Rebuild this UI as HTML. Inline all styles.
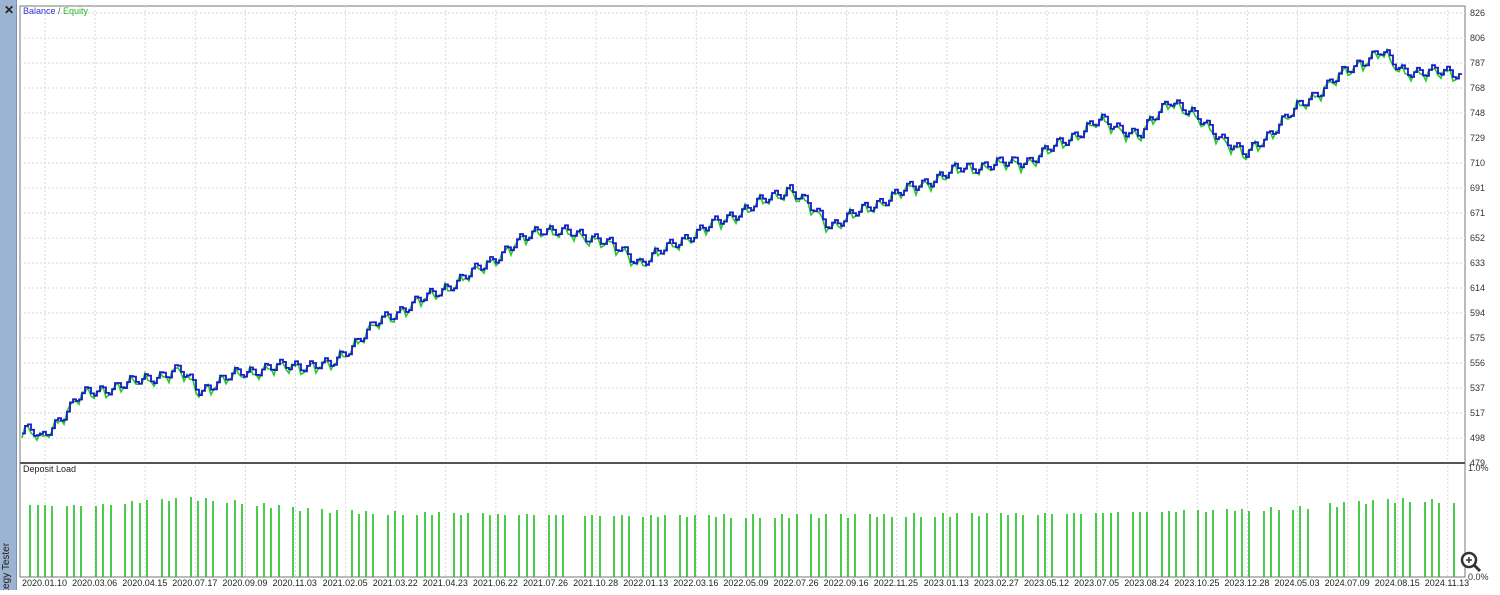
<!DOCTYPE html><html><head><style>
body{margin:0;width:1500px;height:590px;background:#fff;overflow:hidden;font-family:"Liberation Sans",sans-serif;position:relative}
#side{position:absolute;left:0;top:0;width:16px;height:590px;background:#9cb3d1;border-right:1px solid #7f93ad;overflow:hidden}
#x{position:absolute;left:4px;top:3px;font-size:12px;font-weight:bold;color:#222}
#st{position:absolute;left:-37px;top:558px;transform:rotate(-90deg);font-size:10px;color:#222;width:90px;height:14px;white-space:nowrap;text-align:left}
#c{position:absolute;left:0;top:0;width:1500px;height:590px}
</style></head><body>
<div id="side"><div id="x">✕</div><div id="st">Strategy Tester</div></div>
<div id="c"></div>
<script>
(function(){
var h='';
var L=20,R=1465,T=6,M=463,B=577;
h+='<rect x="'+L+'" y="'+T+'" width="'+(R-L)+'" height="'+(B-T)+'" fill="#fff" stroke="#777"/>';
var labs=[826,806,787,768,748,729,710,691,671,652,633,614,594,575,556,537,517,498,479];
for(var i=0;i<labs.length;i++){var y=13+i*25;if(i<18)h+='<line x1="'+L+'" x2="'+R+'" y1="'+y+'" y2="'+y+'" stroke="#d8d8d8" stroke-dasharray="2,2"/>';h+='<text x="1470" y="'+(y+3)+'" fill="#333">'+labs[i]+'</text>';}
var d=['2020.01.10','2020.03.06','2020.04.15','2020.07.17','2020.09.09','2020.11.03','2021.02.05','2021.03.22','2021.04.23','2021.06.22','2021.07.26','2021.10.28','2022.01.13','2022.03.16','2022.05.09','2022.07.26','2022.09.16','2022.11.25','2023.01.13','2023.02.27','2023.05.12','2023.07.05','2023.08.24','2023.10.25','2023.12.28','2024.05.03','2024.07.09','2024.08.15','2024.11.13'];
for(var i=0;i<d.length;i++){var x=45+i*50.1;h+='<line x1="'+x+'" x2="'+x+'" y1="'+T+'" y2="'+B+'" stroke="#d8d8d8" stroke-dasharray="2,2"/>';h+='<text x="'+(x-23)+'" y="586" fill="#222">'+d[i]+'</text>';}
h+='<line x1="'+L+'" x2="'+R+'" y1="'+M+'" y2="'+M+'" stroke="#555" stroke-width="2"/>';
h+='<text x="1468" y="471" fill="#333">1.0%</text><text x="1468" y="580" fill="#333">0.0%</text>';
h+='<text x="23" y="14"><tspan fill="#3333cc">Balance</tspan><tspan fill="#555"> / </tspan><tspan fill="#22bb22">Equity</tspan></text>';
h+='<text x="23" y="472" fill="#222">Deposit Load</text>';
var w=[[22,432],[30,428],[40,440],[80,395],[180,370],[200,390],[240,372],[290,365],[330,365],[380,320],[460,280],[540,228],[600,238],[640,262],[700,230],[790,188],[830,225],[900,192],[960,168],[1030,160],[1100,120],[1140,135],[1170,98],[1200,120],[1245,155],[1300,105],[1340,75],[1380,50],[1400,70],[1460,73]];
function Y(x){for(var i=0;i<w.length-1;i++){if(x<=w[i+1][0]){var t=(x-w[i][0])/(w[i+1][0]-w[i][0]);return w[i][1]+t*(w[i+1][1]-w[i][1]);}}return 73;}
var b='',e='';
for(var x=22;x<=1460;x+=3){var n=Math.sin(x*0.42)*5+Math.sin(x*0.13)*2;var yb=Y(x)+n;b+=x+','+yb.toFixed(1)+' '+(x+3)+','+yb.toFixed(1)+' ';e+=x+','+(yb+Math.sin(x*0.9)*3+2).toFixed(1)+' ';}
h+='<polyline points="'+e+'" fill="none" stroke="#22cc22" stroke-width="1.6"/>';
h+='<polyline points="'+b+'" fill="none" stroke="#1a1acc" stroke-width="1.8"/>';
var k=0;
for(var x=23;x<1458;x+=7.3){k++;if(Math.sin(k*7.7)>0.75)continue;var t=(x-23)/1435;var top=505-10*Math.exp(-Math.pow((x-200)/80,2))+11*Math.sin(t*3.14)-6*Math.exp(-Math.pow((x-1400)/80,2))+Math.sin(k*3.1)*2;h+='<line x1="'+x.toFixed(0)+'" x2="'+x.toFixed(0)+'" y1="'+top.toFixed(0)+'" y2="577" stroke="#1fc01f" stroke-width="1.6"/>';}
h+='<circle cx="1469" cy="560" r="7" fill="#fff" stroke="#333" stroke-width="2.5"/><line x1="1474" y1="565" x2="1480" y2="571" stroke="#333" stroke-width="3"/><path d="M1466 560h6M1469 557v6" stroke="#333" stroke-width="1.5"/>';
document.getElementById('c').innerHTML='<svg xmlns="http://www.w3.org/2000/svg" width="1500" height="590" font-family="Liberation Sans" font-size="9">'+h+'</svg>';
})();
</script></body></html>
